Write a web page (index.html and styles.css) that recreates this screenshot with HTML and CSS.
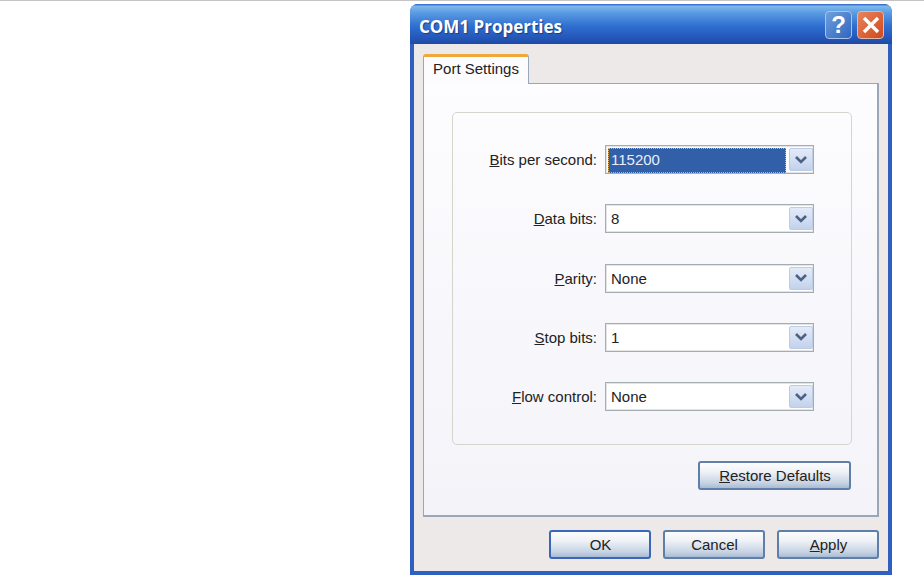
FILE: index.html
```html
<!DOCTYPE html>
<html lang="en">
<head>
    <meta charset="UTF-8">
    <title>COM1 Properties</title>
    <link rel="stylesheet" href="styles.css">
</head>
<body>

<div class="window">
    <div class="titlebar">
        <span class="title">COM1 Properties</span>
        <div class="title-btn help">?</div>
        <div class="title-btn close">
            <svg width="22" height="22" viewBox="0 0 22 22">
                <path d="M4 4 L18 18 M18 4 L4 18" stroke="#fff" stroke-width="3.4" fill="none"/>
            </svg>
        </div>
    </div>

    <div class="client">
        <div class="tabs">
            <div class="tab">Port Settings</div>
        </div>

        <div class="panel">
            <div class="group">
                <div class="row">
                    <label class="row-label"><u>B</u>its per second:</label>
                    <div class="combo">
                        <div class="combo-value"><span class="selected">115200</span></div>
                        <div class="combo-btn"><svg width="14" height="10" viewBox="0 0 14 10"><path d="M2 2 L7 7 L12 2" stroke="#4d6185" stroke-width="2.6" fill="none"/></svg></div>
                    </div>
                </div>
                <div class="row">
                    <label class="row-label"><u>D</u>ata bits:</label>
                    <div class="combo">
                        <div class="combo-value">8</div>
                        <div class="combo-btn"><svg width="14" height="10" viewBox="0 0 14 10"><path d="M2 2 L7 7 L12 2" stroke="#4d6185" stroke-width="2.6" fill="none"/></svg></div>
                    </div>
                </div>
                <div class="row">
                    <label class="row-label"><u>P</u>arity:</label>
                    <div class="combo">
                        <div class="combo-value">None</div>
                        <div class="combo-btn"><svg width="14" height="10" viewBox="0 0 14 10"><path d="M2 2 L7 7 L12 2" stroke="#4d6185" stroke-width="2.6" fill="none"/></svg></div>
                    </div>
                </div>
                <div class="row">
                    <label class="row-label"><u>S</u>top bits:</label>
                    <div class="combo">
                        <div class="combo-value">1</div>
                        <div class="combo-btn"><svg width="14" height="10" viewBox="0 0 14 10"><path d="M2 2 L7 7 L12 2" stroke="#4d6185" stroke-width="2.6" fill="none"/></svg></div>
                    </div>
                </div>
                <div class="row">
                    <label class="row-label"><u>F</u>low control:</label>
                    <div class="combo">
                        <div class="combo-value">None</div>
                        <div class="combo-btn"><svg width="14" height="10" viewBox="0 0 14 10"><path d="M2 2 L7 7 L12 2" stroke="#4d6185" stroke-width="2.6" fill="none"/></svg></div>
                    </div>
                </div>
            </div>
            <div class="restore-row">
                <button class="btn restore"><u>R</u>estore Defaults</button>
            </div>
        </div>

        <div class="actions">
            <button class="btn default">OK</button>
            <button class="btn">Cancel</button>
            <button class="btn"><u>A</u>pply</button>
        </div>
    </div>
</div>

</body>
</html>
```

FILE: styles.css
```css
body {
    margin: 0;
    height: 575px;
    overflow: hidden;
    background: #fff;
    border-top: 1px solid #c4c4c4;
    box-sizing: border-box;
    position: relative;
    font-family: "Liberation Sans", Arial, sans-serif;
    font-size: 15px;
    color: #222;
}

/* window sits on a free desktop */
.window {
    position: absolute;
    left: 410px;
    top: 3px;
    width: 482px;
    height: 571px;
    box-sizing: border-box;
    border-radius: 8px 8px 0 0;
    background: #2f5fc0;
    padding: 0 4px 4px 4px;
    display: flex;
    flex-direction: column;
}

.titlebar {
    height: 40px;
    margin: 0 -4px;
    padding: 0 8px 0 9px;
    border-radius: 8px 8px 0 0;
    background: linear-gradient(#2d62c8 0, #7db8ec 6%, #5a9be2 22%, #2f6fd0 55%, #2456b8 85%, #1f49a6 100%);
    display: flex;
    align-items: center;
    gap: 5px;
    flex-shrink: 0;
}

.title {
    flex: 1;
    color: #fff;
    font-family: "Open Sans", sans-serif;
    font-weight: 700;
    font-size: 17px;
    text-shadow: 1px 1px 1px #1a3c8c;
    margin-top: 5px;
}

.title-btn {
    width: 27px;
    height: 28px;
    box-sizing: border-box;
    border: 1px solid #a9c3e8;
    border-radius: 4px;
    display: flex;
    align-items: center;
    justify-content: center;
    margin-top: 2px;
}

.help {
    background: linear-gradient(135deg, #6f9fdc, #2f66c0);
    color: #fff;
    font-family: "Liberation Sans", sans-serif;
    font-weight: 700;
    font-size: 24px;
}

.close {
    background: linear-gradient(135deg, #e8845e, #cf4a1c);
    border-color: #e6b8a4;
}

.client {
    flex: 1;
    background: #ece9e8;
    padding: 10px 9px 0 9px;
    display: flex;
    flex-direction: column;
    min-height: 0;
}

.tabs {
    display: flex;
    height: 29px;
    flex-shrink: 0;
    position: relative;
    z-index: 1;
}

.tab {
    width: 106px;
    height: 30px;
    box-sizing: border-box;
    background: #fcfcfe;
    border: 1px solid #9aa7b8;
    border-top: 3px solid #f0a83a;
    border-bottom: none;
    border-radius: 3px 3px 0 0;
    text-align: center;
    line-height: 24px;
}

.panel {
    height: 434px;
    box-sizing: border-box;
    border: 1px solid #9aa7b8;
    border-right-width: 2px;
    border-bottom-width: 2px;
    background: linear-gradient(#fdfdff, #f3f3f9);
    padding: 28px 25px 0 28px;
    flex-shrink: 0;
}

.group {
    height: 333px;
    box-sizing: border-box;
    border: 1px solid #d6d5cc;
    border-radius: 5px;
    padding: 32px 37px 0 0;
    display: flex;
    flex-direction: column;
    gap: 30.25px;
}

.row {
    display: flex;
    justify-content: flex-end;
    align-items: center;
    gap: 8px;
}

.combo {
    width: 209px;
    height: 29px;
    box-sizing: border-box;
    border: 1px solid #a5acb2;
    box-shadow: inset 0 0 0 1px #e4e4e4;
    background: #fff;
    display: flex;
    padding: 2px 0 2px 2px;
}

.combo-value {
    flex: 1;
    padding-left: 3px;
    line-height: 24px;
}

.selected {
    display: block;
    margin-left: -3px;
    padding-left: 2px;
    height: 23px;
    line-height: 22px;
    margin-right: 3px;
    background: #3160a8;
    color: #e8eefa;
    border: 1px dotted #e0b060;
}

.combo-btn {
    width: 24px;
    margin-right: 0;
    box-sizing: border-box;
    border: 1px solid #bccbe6;
    border-radius: 2px;
    background: linear-gradient(#e4ebf8, #c2d2ec);
    display: flex;
    align-items: center;
    justify-content: center;
}

.restore-row {
    display: flex;
    justify-content: flex-end;
    margin-top: 16px;
    padding-right: 1px;
}

.btn {
    width: 102px;
    height: 29px;
    padding: 0 0 0 1px;
    box-sizing: border-box;
    border: 2px solid #5f7fa8;
    border-radius: 3px;
    background: linear-gradient(#fbfcfd 0, #eff2f6 35%, #c6d3e4 80%, #a9bbd4 100%);
    font-family: "Liberation Sans", Arial, sans-serif;
    font-size: 15px;
    color: #222;
}

.restore {
    width: 153px;
}

.default {
    border-color: #3c66b8;
}

.actions {
    display: flex;
    justify-content: flex-end;
    gap: 12px;
    margin-top: 13px;
}
```
